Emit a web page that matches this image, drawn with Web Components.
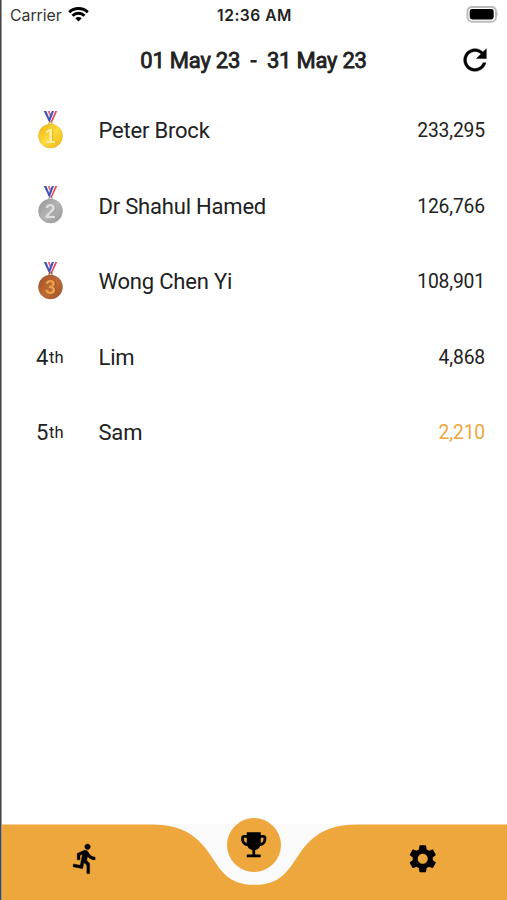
<!DOCTYPE html>
<html lang="en">
<head>
<meta charset="utf-8">
<title>Leaderboard</title>
<style>
  html, body { margin: 0; height: 100%; background: #fff; }
  body { font-family: Roboto, sans-serif; color: #212121; overflow: hidden; }
</style>
</head>
<body>
<leader-app>
  <status-bar slot="status" carrier="Carrier" time="12:36 AM"></status-bar>
  <date-header slot="header">01 May 23&nbsp; - &nbsp;31 May 23</date-header>
  <rank-row rank="1" score="233,295">Peter Brock</rank-row>
  <rank-row rank="2" score="126,766">Dr Shahul Hamed</rank-row>
  <rank-row rank="3" score="108,901">Wong Chen Yi</rank-row>
  <rank-row rank="4" score="4,868">Lim</rank-row>
  <rank-row rank="5" score="2,210" class="me">Sam</rank-row>
  <tab-bar slot="tabs"></tab-bar>
</leader-app>

<script>
class LeaderApp extends HTMLElement {
  constructor() {
    super();
    this.attachShadow( { mode: 'open' } ).innerHTML = `
    <style>
      :host {
        display: flex; flex-direction: column; box-sizing: border-box;
        height: 100vh; padding-left: 2px;
        background: linear-gradient(90deg, #444 1px, #999 1px 2px, #fff 2px);
      }
      main { flex: 1; padding-top: 1px; }
    </style>
    <slot name="status"></slot>
    <slot name="header"></slot>
    <main><slot></slot></main>
    <slot name="tabs"></slot>
    `;
  }
}

class StatusBar extends HTMLElement {
  connectedCallback() {
    this.attachShadow( { mode: 'open' } ).innerHTML = `
    <style>
      :host {
        display: grid; grid-template-columns: 1fr auto 1fr; align-items: center;
        height: 30px; padding: 0 8px; font-family: Inter, sans-serif; font-size: 15.8px;
      }
      .left { display: flex; align-items: center; gap: 6px; color: #333; }
      .time { font-weight: 600; font-size: 15.6px; letter-spacing: 0.5px; }
      .battery { justify-self: end; }
      svg { display: block; }
    </style>
    <div class="left">
      <span>${this.getAttribute( 'carrier' )}</span>
      <svg width="21" height="16" viewBox="0 0 21 16" fill="none" stroke="#000" stroke-width="2.9">
        <path d="M1.2 5.2C6.3 .3 14.7 .3 19.8 5.2"/>
        <path d="M4.5 8.7C7.8 5.5 13.2 5.5 16.5 8.7"/>
        <path d="M7.3 11.3Q10.5 8.5 13.7 11.3L10.5 14.5Z" fill="#000" stroke="none"/>
      </svg>
    </div>
    <div class="time">${this.getAttribute( 'time' )}</div>
    <svg class="battery" width="33" height="18" viewBox="0 0 33 18">
      <rect x="1.5" y=".9" width="28.5" height="14.8" rx="4.5" fill="#fff" stroke="#bcbcbc" stroke-width="2"/>
      <rect x="3.7" y="3.1" width="24" height="10.4" rx="2.4"/>
      <path d="M31.3 6.3q1.7 2 0 4z" fill="#aaa"/>
    </svg>
    `;
  }
}

class DateHeader extends HTMLElement {
  constructor() {
    super();
    this.attachShadow( { mode: 'open' } ).innerHTML = `
    <style>
      :host {
        display: grid; grid-template-columns: 50px 1fr 50px; align-items: center;
        height: 60px; padding: 0 7px 2px 5px;
      }
      .range {
        text-align: center; font-size: 22px; letter-spacing: -0.22px;
        -webkit-text-stroke: 0.8px; white-space: nowrap;
      }
      svg { display: block; justify-self: center; }
    </style>
    <span></span>
    <div class="range"><slot></slot></div>
    <svg width="34" height="34" viewBox="0 0 24 24"><path d="M17.65 6.35C16.2 4.9 14.21 4 12 4c-4.42 0-7.99 3.58-7.99 8s3.57 8 7.99 8c3.73 0 6.84-2.55 7.73-6h-2.08c-.82 2.33-3.04 4-5.65 4-3.31 0-6-2.69-6-6s2.69-6 6-6c1.66 0 3.14.69 4.22 1.78L13 11h7V4l-2.35 2.35z" stroke="#000" stroke-width=".3"/></svg>
    `;
  }
}

const MEDALS = {
  1: { light: '#fbdc3c', base: '#f0b012', rim: '#d9a010', digit: '#fff0a0' },
  2: { light: '#b4b4b4', base: '#989898', rim: '#888888', digit: '#dedede' },
  3: { light: '#bd6a35', base: '#a15127', rim: '#8b431e', digit: '#eda04c' }
};

class RankRow extends HTMLElement {
  connectedCallback() {
    const rank = this.getAttribute( 'rank' );
    this.attachShadow( { mode: 'open' } ).innerHTML = `
    <style>
      :host {
        display: grid; grid-template-columns: 96.5px 1fr auto; align-items: center;
        height: 75.5px; padding-right: 22px;
      }
      :host(.me) .score { color: #eda73c; }
      .rank { display: flex; align-items: center; padding-left: 34px; font-size: 22px; }
      small { font-size: 16.5px; letter-spacing: 0.2px; margin-left: 0.5px; }
      .name { font-size: 22px; letter-spacing: -0.2px; }
      .score { font-size: 19.3px; letter-spacing: -0.15px; }
      svg { display: block; position: relative; top: -1px; }
    </style>
    <div class="rank">${this.badge( rank )}</div>
    <div class="name"><slot></slot></div>
    <div class="score">${this.getAttribute( 'score' )}</div>
    `;
  }

  badge( rank ) {
    const medal = MEDALS[rank];
    if ( !medal ) return `<span>${rank}</span><small>th</small>`;
    return `
      <svg width="29" height="40" viewBox="0 0 29 40">
        <defs><linearGradient id="g" x1="0" y1="0" x2="1" y2="1">
          <stop offset="0" stop-color="${medal.base}"/>
          <stop offset=".5" stop-color="${medal.light}"/>
          <stop offset="1" stop-color="${medal.base}"/>
        </linearGradient></defs>
        <path d="M7.7 1h3.2l4.8 10-2.2 2z" fill="#4055b5"/>
        <path d="M10.3 1h1.8l3 7-1 2z" fill="#f1e9f4"/>
        <path d="M11.8 1h1.7l2 4.500-1 2z" fill="#e35b6c"/>
        <path d="M21.3 1h-2.3l-4.700 11 1.500 1z" fill="#e34e60"/>
        <path d="M19.1 1h-1.2l-4.500 10 1 1z" fill="#fff"/>
        <path d="M18 1h-2.2l-3.400 9 1.500 2z" fill="#4055b5"/>
        <circle cx="14.5" cy="13.3" r="1.6" fill="none" stroke="${medal.rim}"/>
        <circle cx="14.5" cy="26" r="12" fill="url(#g)" stroke="${medal.rim}" stroke-width=".4"/>
        <text x="14.5" y="32.8" text-anchor="middle" style="font: 700 19.5px 'Liberation Sans', sans-serif; -webkit-text-stroke: 0.7px ${medal.digit}; text-shadow: 0.7px 0.7px 0 ${medal.rim}" fill="${medal.digit}">${rank}</text>
      </svg>`;
  }
}

class TabBar extends HTMLElement {
  constructor() {
    super();
    this.attachShadow( { mode: 'open' } ).innerHTML = `
    <style>
      :host {
        display: grid; grid-template-columns: repeat(3, 1fr); position: relative;
        height: 76px; background: #fafafa;
      }
      .shape { position: absolute; inset: 0; width: 100%; height: 100%; }
      .tab { position: relative; display: flex; justify-content: center; padding-top: 18px; }
      .tab.run { padding-right: 2px; }
      .tab.active { padding-top: 0; padding-right: 1px; }
      .ball {
        display: flex; align-items: center; justify-content: center;
        width: 54px; height: 54px; margin-top: -6px; border-radius: 50%; background: #eda73c;
      }
      svg { display: block; }
    </style>
    <svg class="shape" viewBox="0 0 505 76" preserveAspectRatio="none">
      <path fill="#eda73c" d="M0 .6H150C180 .6 195 12 207 29C219 46 225 60.8 252.5 60.8C280 60.8 286 46 298 29C310 12 325 .6 355 .6H505V76H0Z"/>
    </svg>
    <div class="tab run">
      <svg width="33" height="33" viewBox="0 0 24 24"><path d="M13.49 5.48c1.1 0 2-.9 2-2s-.9-2-2-2-2 .9-2 2 .9 2 2 2zm-3.6 13.9l1-4.4 2.1 2v6h2v-7.5l-2.1-2 .6-3c1.3 1.5 3.3 2.5 5.5 2.5v-2c-1.9 0-3.5-1-4.3-2.4l-1-1.6c-.4-.6-1-1-1.7-1-.3 0-.5.1-.8.1l-5.2 2.2v4.7h2v-3.4l1.8-.7-1.6 8.1-4.9-1-.4 2 7 1.4z" stroke="#000" stroke-width=".3"/></svg>
    </div>
    <div class="tab active">
      <div class="ball">
        <svg width="33.5" height="33.5" viewBox="0 0 24 24"><path d="M19 5h-2V3H7v2H5c-1.1 0-2 .9-2 2v1c0 2.55 1.92 4.63 4.39 4.94.63 1.5 1.98 2.63 3.61 2.96V19H7v2h10v-2h-4v-3.1c1.63-.33 2.98-1.46 3.61-2.96C19.08 12.63 21 10.55 21 8V7c0-1.1-.9-2-2-2zM5 8V7h2v3.82C5.84 10.4 5 9.3 5 8zm14 0c0 1.3-.84 2.4-2 2.82V7h2v1z"/></svg>
      </div>
    </div>
    <div class="tab">
      <svg width="33.5" height="33.5" viewBox="0 0 24 24"><path d="M19.14 12.94c.04-.3.06-.61.06-.94 0-.32-.02-.64-.07-.94l2.03-1.58c.18-.14.23-.41.12-.61l-1.92-3.32c-.12-.22-.37-.29-.59-.22l-2.39.96c-.5-.38-1.03-.7-1.62-.94l-.36-2.54c-.04-.24-.24-.41-.48-.41h-3.84c-.24 0-.43.17-.47.41l-.36 2.54c-.59.24-1.13.57-1.62.94l-2.39-.96c-.22-.08-.47 0-.59.22L2.74 8.87c-.12.21-.08.47.12.61l2.03 1.58c-.05.3-.09.63-.09.94s.02.64.07.94l-2.03 1.58c-.18.14-.23.41-.12.61l1.92 3.32c.12.22.37.29.59.22l2.39-.96c.5.38 1.03.7 1.62.94l.36 2.54c.05.24.24.41.48.41h3.84c.24 0 .44-.17.47-.41l.36-2.54c.59-.24 1.13-.56 1.62-.94l2.39.96c.22.08.47 0 .59-.22l1.92-3.32c.12-.22.07-.47-.12-.61l-2.01-1.58zM12 15.6c-1.98 0-3.6-1.62-3.6-3.6s1.62-3.6 3.6-3.6 3.6 1.62 3.6 3.6-1.62 3.6-3.6 3.6z"/></svg>
    </div>
    `;
  }
}

customElements.define( 'leader-app', LeaderApp );
customElements.define( 'status-bar', StatusBar );
customElements.define( 'date-header', DateHeader );
customElements.define( 'rank-row', RankRow );
customElements.define( 'tab-bar', TabBar );
</script>
</body>
</html>
